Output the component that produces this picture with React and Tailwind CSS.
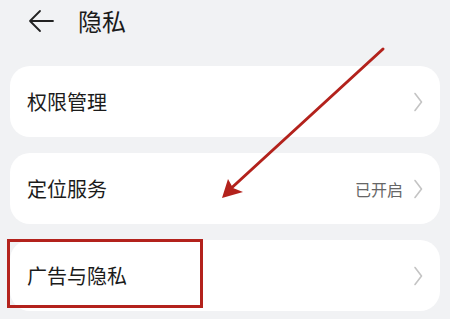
import React from 'react';

const Chevron = () => (
  <svg width="10" height="20" viewBox="0 0 10 20" fill="none">
    <path d="M2 1.5 L8.5 10 L2 18.5" stroke="#c4c4c4" strokeWidth="1.6" strokeLinecap="round" strokeLinejoin="round" />
  </svg>
);

const Row = ({ label, value }) => (
  <div className="h-[71px] bg-white rounded-[20px] flex items-center justify-between pl-[17px] pr-[17px]">
    <span className="text-[20px] text-[#1b1b1b]">{label}</span>
    <div className="flex items-center gap-[10px]">
      {value && <span className="text-[16px] text-[#666666]">{value}</span>}
      <Chevron />
    </div>
  </div>
);

const App = () => {
  return (
    <div
      className="relative w-[450px] h-[319px] overflow-hidden bg-[#f1f2f4]"
      style={{ fontFamily: '"Noto Sans CJK SC", "Noto Sans", sans-serif' }}
    >
      <div className="h-[42px] flex items-center pl-[28px] gap-[24px]">
        <svg width="26" height="24" viewBox="0 0 26 24" fill="none">
          <path d="M12 2 L2 12 L12 22 M2 12 H25" stroke="#222" strokeWidth="1.8" strokeLinecap="round" strokeLinejoin="round" />
        </svg>
        <span className="text-[24px] text-[#1b1b1b] leading-none">隐私</span>
      </div>

      <div className="mt-[24px] mx-[10px] flex flex-col gap-[16px]">
        <Row label="权限管理" />
        <Row label="定位服务" value="已开启" />
        <Row label="广告与隐私" />
      </div>

      {/* annotation overlay */}
      <div className="absolute left-[7px] top-[239px] w-[196px] h-[69px] border-[3px] border-[#b3221c]" />
      <svg className="absolute left-0 top-0" width="450" height="319" viewBox="0 0 450 319">
        <line x1="383" y1="49" x2="226" y2="193" stroke="#b3221c" strokeWidth="3" strokeLinecap="round" />
        <path d="M222 198 L228 179 L233 188 L243 192 Z" fill="#b3221c" />
      </svg>
    </div>
  );
};

export default App;
